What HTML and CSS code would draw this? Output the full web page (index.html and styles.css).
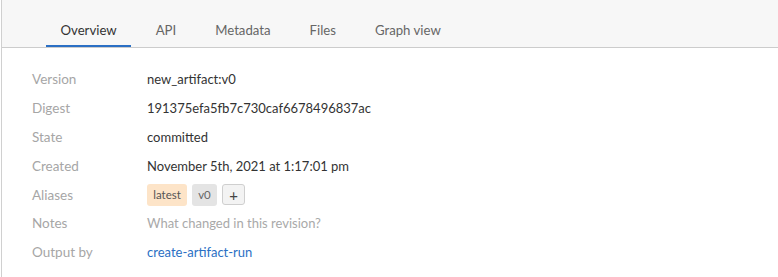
FILE: index.html
```html
<!DOCTYPE html>
<html>
<head>
<meta charset="utf-8">
<link rel="stylesheet" href="styles.css">
</head>
<body>
<div class="page">
  <div class="tabs">
    <div class="tab active">Overview</div>
    <div class="tab">API</div>
    <div class="tab">Metadata</div>
    <div class="tab">Files</div>
    <div class="tab">Graph view</div>
  </div>
  <div class="details">
    <div class="label">Version</div><div class="value">new_artifact:v0</div>
    <div class="label">Digest</div><div class="value">191375efa5fb7c730caf6678496837ac</div>
    <div class="label">State</div><div class="value">committed</div>
    <div class="label">Created</div><div class="value">November 5th, 2021 at 1:17:01 pm</div>
    <div class="label">Aliases</div>
    <div class="value aliases">
      <span class="badge latest">latest</span>
      <span class="badge v0">v0</span>
      <span class="badge add">+</span>
    </div>
    <div class="label">Notes</div><div class="value placeholder">What changed in this revision?</div>
    <div class="label">Output by</div><div class="value"><a class="link" href="#">create-artifact-run</a></div>
  </div>
</div>
</body>
</html>
```
FILE: styles.css
```css
html, body {
  margin: 0;
  padding: 0;
  background: #fff;
}
body {
  font-family: "Lato", "Noto Sans", sans-serif;
  font-size: 13px;
  color: #333;
}
.page {
  margin-left: 1px;
  border-left: 1px solid #d0d0d0;
  height: 277px;
}
.tabs {
  display: flex;
  gap: 10px;
  height: 47px;
  padding-left: 44px;
  background: #f7f7f7;
  border-bottom: 1px solid #cccccc;
}
.tab {
  display: flex;
  align-items: center;
  padding: 15px 14.5px 0;
  height: 30px;
  border-bottom: 2px solid transparent;
  color: #666;
  font-size: 13.2px;
}
.tab.active {
  color: #333;
  border-bottom-color: #2a6fc4;
}
.details {
  display: grid;
  grid-template-columns: 115px auto;
  grid-auto-rows: 28.8px;
  padding: 17px 0 0 30px;
}
.label, .value {
  display: flex;
  align-items: center;
  font-size: 13.5px;
}
.label {
  color: #a6a6a6;
}
.value {
  color: #333;
  font-size: 13px;
}
.placeholder {
  color: #a9a9a9;
}
.link {
  color: #2a6fc4;
  text-decoration: none;
}
.aliases {
  gap: 5px;
}
.badge {
  display: flex;
  align-items: center;
  justify-content: center;
  height: 22px;
  box-sizing: border-box;
  border-radius: 3px;
  font-size: 11.5px;
  color: #555;
}
.badge.latest {
  background: #fde4c8;
  width: 40px;
}
.badge.v0 {
  background: #e4e4e4;
  width: 25px;
  color: #666;
}
.badge.add {
  width: 23px;
  height: 21px;
  background: #f3f3f3;
  border: 1px solid #cfcfcf;
  font-size: 15px;
  color: #444;
}
```
